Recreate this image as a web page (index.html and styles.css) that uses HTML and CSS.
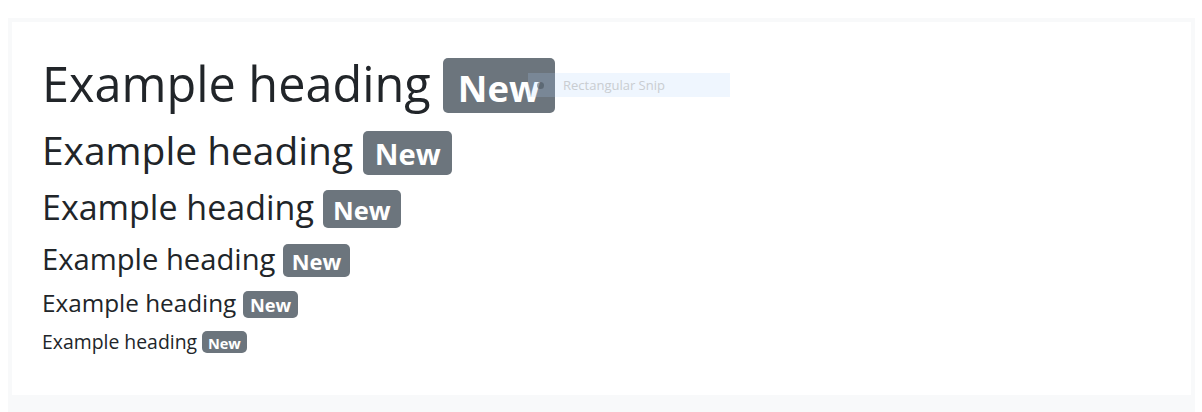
FILE: index.html
```html
<!DOCTYPE html>
<html lang="en">
<head>
<meta charset="utf-8">
<title>Headings</title>
<link rel="stylesheet" href="styles.css">
</head>
<body>
<div class="frame">
  <div class="example">
    <h1 class="heading h1">Example heading <span class="badge">New</span></h1>
    <h2 class="heading h2">Example heading <span class="badge">New</span></h2>
    <h3 class="heading h3">Example heading <span class="badge">New</span></h3>
    <h4 class="heading h4">Example heading <span class="badge">New</span></h4>
    <h5 class="heading h5">Example heading <span class="badge">New</span></h5>
    <h6 class="heading h6">Example heading <span class="badge">New</span></h6>
  </div>
</div>
<div class="snip"><span class="snip-icon"><span class="snip-dot"></span></span><span class="snip-label">Rectangular Snip</span></div>
</body>
</html>
```
FILE: styles.css
```css
html, body {
  background: #ffffff;
}
body {
  margin: 18px 7px 0 8px;
  font-family: "Open Sans", "Noto Sans", "Liberation Sans", sans-serif;
  color: #212529;
}
.frame {
  background: #f8f9fa;
  padding: 4px 4px 18px 4px;
}
.example {
  background: #ffffff;
  padding: 32px 30px 30px 30px;
}
.heading {
  margin: 0;
  font-weight: 500;
  line-height: 1.2;
}
.h1 { font-size: 48.6px; margin-bottom: 13.5px; }
.h2 { font-size: 38.9px; margin-bottom: 12.5px; }
.h3 { font-size: 34px; margin-bottom: 13.5px; }
.h4 { font-size: 29.2px; margin-bottom: 11.5px; }
.h5 { font-size: 24.3px; margin-bottom: 11.5px; }
.h6 { font-size: 19.4px; margin-bottom: 12px; }
.badge {
  display: inline-block;
  font-size: 75%;
  font-weight: 700;
  line-height: 1;
  color: #ffffff;
  background: #6c757d;
  padding: 0.32em 0.4em 0.19em;
  border-radius: 5px;
  vertical-align: baseline;
  white-space: nowrap;
}
.snip {
  position: absolute;
  left: 528px;
  top: 73px;
  width: 202px;
  height: 24px;
  display: flex;
  align-items: center;
  background: rgba(175, 210, 248, 0.2);
}
.snip-icon {
  width: 35px;
  height: 24px;
  display: flex;
  align-items: center;
  justify-content: center;
}
.snip-dot {
  width: 7px;
  height: 7px;
  border-radius: 50%;
  background: rgba(70, 80, 90, 0.55);
  margin-left: -10px;
}
.snip-label {
  font-family: "Open Sans", "Noto Sans", sans-serif;
  font-size: 13px;
  color: #c9cdd1;
  white-space: nowrap;
}
```
